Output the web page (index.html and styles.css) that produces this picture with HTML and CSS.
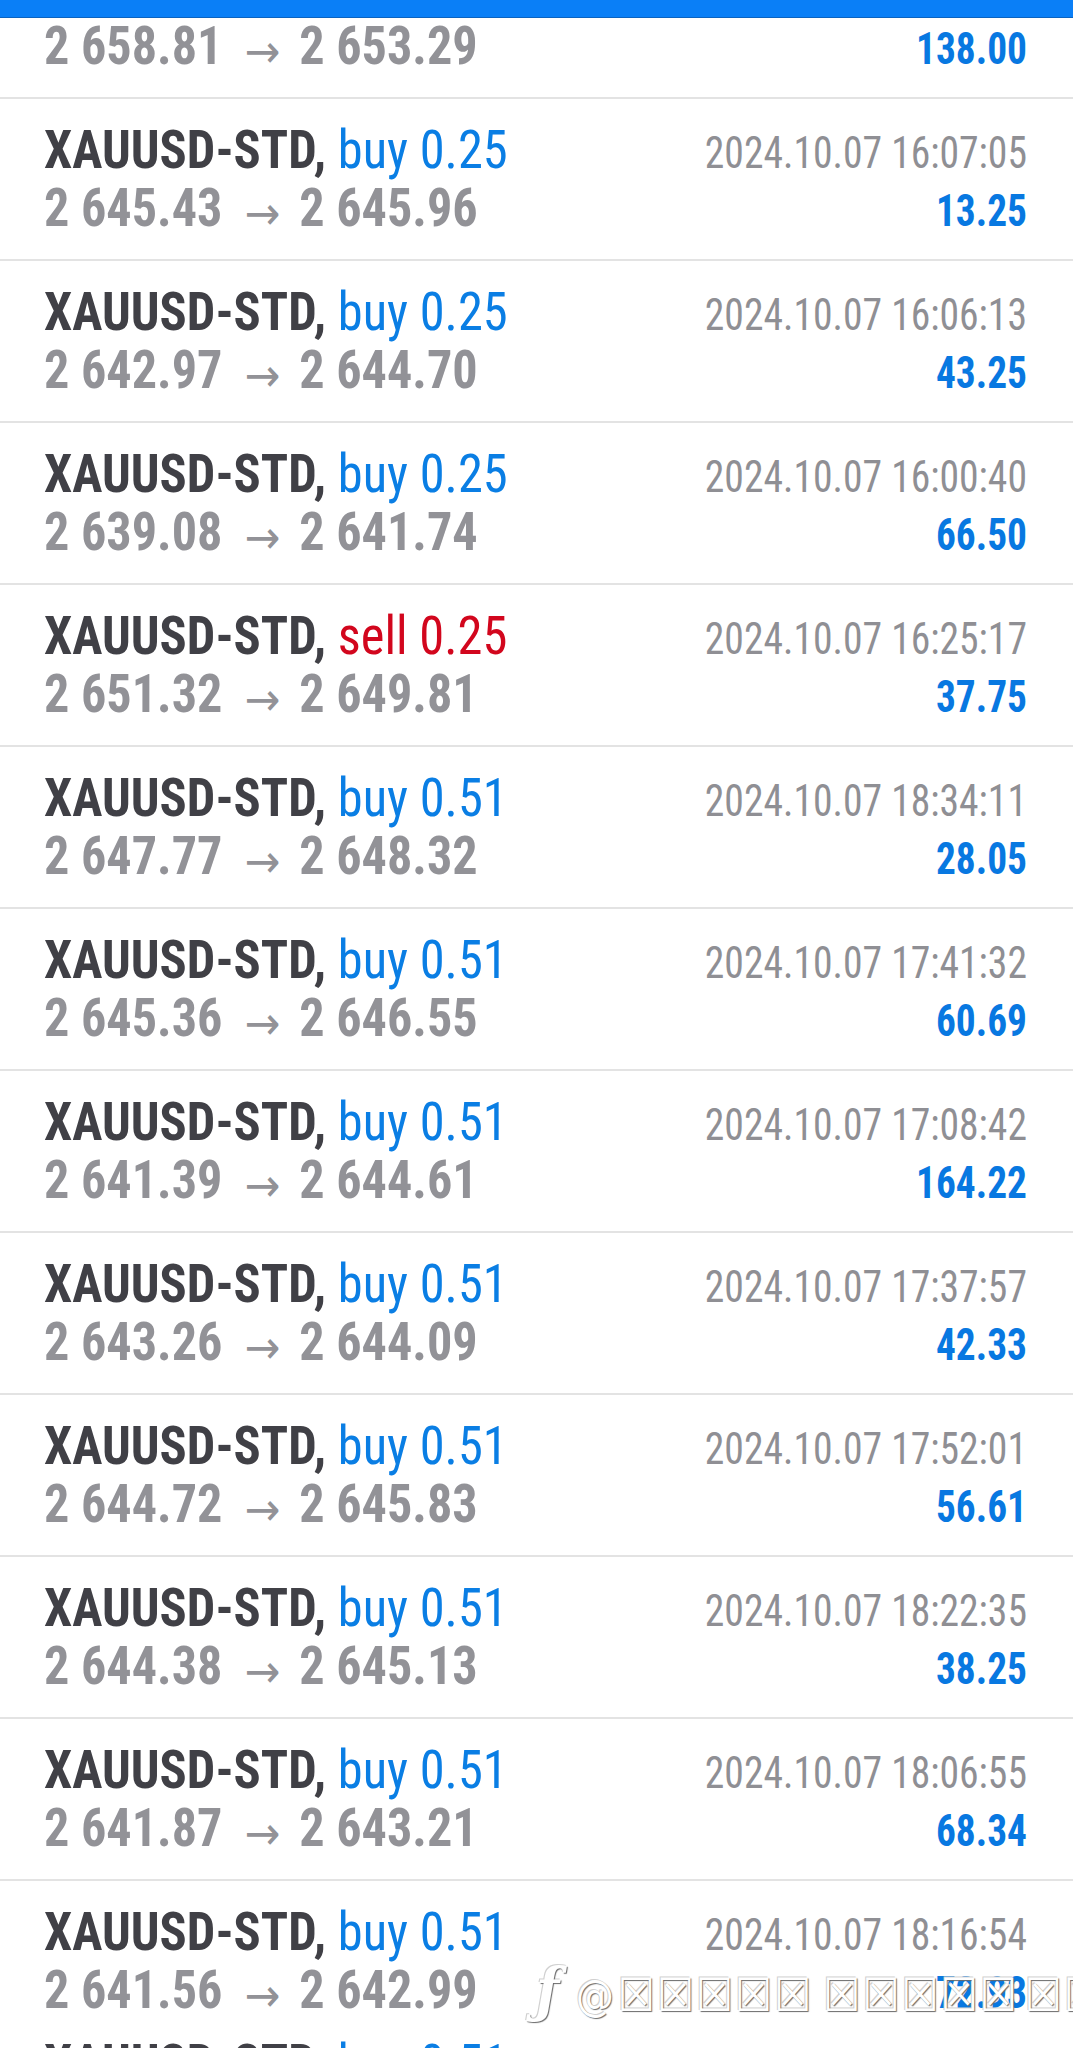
FILE: index.html
```html
<!DOCTYPE html>
<html lang="en">
<head>
<meta charset="utf-8">
<title>History</title>
<link rel="stylesheet" href="styles.css">
</head>
<body>
<div class="bar"></div>
<div class="list">
  <div class="rows">
    <div class="row">
      <div class="sym">XAUUSD-STD, <span class="buy">buy 0.25</span></div>
      <div class="time">2024.10.07 16:10:22</div>
      <div class="price">2 658.81<span class="arrow">→</span>2 653.29</div>
      <div class="profit">138.00</div>
    </div>
    <div class="row">
      <div class="sym">XAUUSD-STD, <span class="buy">buy 0.25</span></div>
      <div class="time">2024.10.07 16:07:05</div>
      <div class="price">2 645.43<span class="arrow">→</span>2 645.96</div>
      <div class="profit">13.25</div>
    </div>
    <div class="row">
      <div class="sym">XAUUSD-STD, <span class="buy">buy 0.25</span></div>
      <div class="time">2024.10.07 16:06:13</div>
      <div class="price">2 642.97<span class="arrow">→</span>2 644.70</div>
      <div class="profit">43.25</div>
    </div>
    <div class="row">
      <div class="sym">XAUUSD-STD, <span class="buy">buy 0.25</span></div>
      <div class="time">2024.10.07 16:00:40</div>
      <div class="price">2 639.08<span class="arrow">→</span>2 641.74</div>
      <div class="profit">66.50</div>
    </div>
    <div class="row">
      <div class="sym">XAUUSD-STD, <span class="sell">sell 0.25</span></div>
      <div class="time">2024.10.07 16:25:17</div>
      <div class="price">2 651.32<span class="arrow">→</span>2 649.81</div>
      <div class="profit">37.75</div>
    </div>
    <div class="row">
      <div class="sym">XAUUSD-STD, <span class="buy">buy 0.51</span></div>
      <div class="time">2024.10.07 18:34:11</div>
      <div class="price">2 647.77<span class="arrow">→</span>2 648.32</div>
      <div class="profit">28.05</div>
    </div>
    <div class="row">
      <div class="sym">XAUUSD-STD, <span class="buy">buy 0.51</span></div>
      <div class="time">2024.10.07 17:41:32</div>
      <div class="price">2 645.36<span class="arrow">→</span>2 646.55</div>
      <div class="profit">60.69</div>
    </div>
    <div class="row">
      <div class="sym">XAUUSD-STD, <span class="buy">buy 0.51</span></div>
      <div class="time">2024.10.07 17:08:42</div>
      <div class="price">2 641.39<span class="arrow">→</span>2 644.61</div>
      <div class="profit">164.22</div>
    </div>
    <div class="row">
      <div class="sym">XAUUSD-STD, <span class="buy">buy 0.51</span></div>
      <div class="time">2024.10.07 17:37:57</div>
      <div class="price">2 643.26<span class="arrow">→</span>2 644.09</div>
      <div class="profit">42.33</div>
    </div>
    <div class="row">
      <div class="sym">XAUUSD-STD, <span class="buy">buy 0.51</span></div>
      <div class="time">2024.10.07 17:52:01</div>
      <div class="price">2 644.72<span class="arrow">→</span>2 645.83</div>
      <div class="profit">56.61</div>
    </div>
    <div class="row">
      <div class="sym">XAUUSD-STD, <span class="buy">buy 0.51</span></div>
      <div class="time">2024.10.07 18:22:35</div>
      <div class="price">2 644.38<span class="arrow">→</span>2 645.13</div>
      <div class="profit">38.25</div>
    </div>
    <div class="row">
      <div class="sym">XAUUSD-STD, <span class="buy">buy 0.51</span></div>
      <div class="time">2024.10.07 18:06:55</div>
      <div class="price">2 641.87<span class="arrow">→</span>2 643.21</div>
      <div class="profit">68.34</div>
    </div>
    <div class="row row-tight">
      <div class="sym">XAUUSD-STD, <span class="buy">buy 0.51</span></div>
      <div class="time">2024.10.07 18:16:54</div>
      <div class="price">2 641.56<span class="arrow">→</span>2 642.99</div>
      <div class="profit">72.93</div>
    </div>
    <div class="row">
      <div class="sym">XAUUSD-STD, <span class="buy">buy 0.51</span></div>
      <div class="time">2024.10.07 18:11:20</div>
      <div class="price">2 642.10<span class="arrow">→</span>2 643.05</div>
      <div class="profit">48.45</div>
    </div>
  </div>
</div>
<div class="watermark"><span class="logo">ƒ</span><span class="at">@</span><span class="boxes">☒☒☒☒☒</span><span class="boxes gap">☒☒☒☒☒</span><span class="boxes gap-s">☒☒</span></div>
</body>
</html>
```

FILE: styles.css
```css
html, body {
  margin: 0;
  padding: 0;
  background: #ffffff;
}

body {
  width: 1073px;
  height: 2048px;
  overflow: hidden;
  position: relative;
  font-family: "Roboto Condensed", "Roboto", "Liberation Sans", sans-serif;
  font-stretch: condensed;
}

.bar {
  height: 17px;
  background: #0a7ff7;
  border-bottom: 1px solid #0b63c0;
}

.list {
  height: 2030px;
  overflow: hidden;
}

.rows {
  margin-top: -81px;
}

.row {
  box-sizing: border-box;
  height: 162px;
  padding: 22px 46px 0 44px;
  border-bottom: 2px solid #e3e3e3;
  display: grid;
  grid-template-columns: 1fr auto;
  grid-auto-rows: 58px;
  align-items: baseline;
}

.row-tight {
  height: 132px;
  border-bottom: none;
}

.sym {
  font-size: 54px;
  line-height: 58px;
  font-weight: 700;
  color: #404046;
  white-space: nowrap;
  transform: scaleX(0.935);
  transform-origin: left center;
}

.buy {
  font-weight: 400;
  color: #0a7ee4;
}

.sell {
  font-weight: 400;
  color: #d2061d;
}

.price {
  font-size: 54px;
  line-height: 58px;
  font-weight: 700;
  color: #929297;
  white-space: nowrap;
  transform: scaleX(0.93);
  transform-origin: left center;
}

.arrow {
  font-family: "Roboto", "DejaVu Sans", sans-serif;
  font-stretch: normal;
  font-size: 46px;
  font-weight: 400;
  color: #929297;
  vertical-align: -3px;
  margin: 0 20px 0 24px;
}

.time {
  font-size: 44px;
  line-height: 58px;
  font-weight: 400;
  color: #8f8f94;
  text-align: right;
  white-space: nowrap;
  transform: scaleX(0.9);
  transform-origin: right center;
}

.profit {
  font-size: 44px;
  line-height: 58px;
  font-weight: 700;
  color: #0878e1;
  text-align: right;
  white-space: nowrap;
  transform: scaleX(0.895);
  transform-origin: right center;
}

.watermark {
  position: absolute;
  left: 536px;
  top: 1966px;
  display: flex;
  align-items: baseline;
  font-family: "DejaVu Sans", sans-serif;
  font-size: 46px;
  line-height: 48px;
  color: #ffffff;
  white-space: nowrap;
  text-shadow: 1px 1px 1px #6a6a6a, -1px -1px 0 #d0d0d0;
}

.logo {
  font-family: "DejaVu Serif", serif;
  font-style: italic;
  font-weight: 700;
  font-size: 60px;
  width: 40px;
}

.at {
  font-size: 42px;
  margin-right: 4px;
}

.boxes {
  letter-spacing: 2px;
}

.gap {
  margin-left: 10px;
}

.gap-s {
  margin-left: 6px;
}
```
